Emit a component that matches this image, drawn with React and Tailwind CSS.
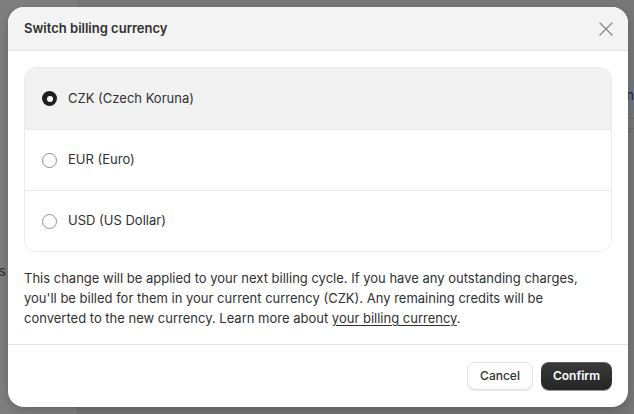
import { X } from "lucide-react";

const currencies = [
  { code: "CZK", name: "Czech Koruna" },
  { code: "EUR", name: "Euro" },
  { code: "USD", name: "US Dollar" },
];

function Radio({ checked }) {
  if (checked) {
    return (
      <span className="flex h-[15px] w-[15px] shrink-0 items-center justify-center rounded-full bg-[#1f1f1f]">
        <span className="h-[6px] w-[6px] rounded-full bg-white" />
      </span>
    );
  }
  return (
    <span className="h-[15px] w-[15px] shrink-0 rounded-full border border-[#8f8f8f] bg-white" />
  );
}

export default function App() {
  const selected = "CZK";

  return (
    <div
      className="relative h-[414px] w-[634px] overflow-hidden bg-[#7d7d7d] text-[#303030]"
      style={{ fontFamily: "Inter, 'Noto Sans', sans-serif" }}
    >
      {/* page underneath, dimmed */}
      <div className="flex h-full">
        <div className="w-[78px] border-r border-[#727272] bg-[#7f7f7f] pt-[262px] text-[13px] text-[#333]">
          <span className="-ml-[1px]">s</span>
        </div>
        <div className="flex-1 bg-[#777777]">
          <div className="ml-auto mt-[82px] flex h-[28px] w-[12px] items-center justify-end bg-[#6e7680] text-[13px] text-[#222]">
            n
          </div>
          <div className="ml-auto mt-[8px] h-px w-[12px] bg-[#6b6b6b]" />
          <div className="ml-auto mt-[9px] h-px w-[12px] bg-[#6b6b6b]" />
        </div>
      </div>

      {/* modal */}
      <div className="absolute left-[8px] top-[7px] flex w-[620px] flex-col overflow-hidden rounded-[16px] bg-white shadow-[0_4px_12px_rgba(0,0,0,0.2)]">
        <div className="flex h-[44px] items-center justify-between border-b border-[#e3e3e3] bg-[#f3f3f3] pl-4 pr-[10px]">
          <h2 className="text-[13px] font-semibold">Switch billing currency</h2>
          <X className="h-6 w-6 text-[#8a8a8a]" strokeWidth={1.4} />
        </div>

        <div className="flex flex-col gap-4 p-4">
          <div className="overflow-hidden rounded-[12px] border border-[#ebebeb]">
            {currencies.map((c, i) => (
              <div
                key={c.code}
                className={`flex h-[61px] items-center gap-[11px] pl-[17px] text-[13px] ${
                  i > 0 ? "border-t border-[#ebebeb]" : ""
                } ${c.code === selected ? "bg-[#f1f1f1]" : "bg-white"}`}
              >
                <Radio checked={c.code === selected} />
                <span>
                  {c.code} ({c.name})
                </span>
              </div>
            ))}
          </div>

          <p className="max-w-[572px] text-[13px] leading-[20px]">
            This change will be applied to your next billing cycle. If you have any outstanding charges,
            you'll be billed for them in your current currency (CZK). Any remaining credits will be
            converted to the new currency. Learn more about{" "}
            <span className="underline underline-offset-2">your billing currency</span>.
          </p>
        </div>

        <div className="flex justify-end gap-2 border-t border-[#e3e3e3] px-4 pb-[17px] pt-[17px]">
          <button className="h-[28px] rounded-[8px] border border-[#e3e3e3] bg-white px-[12px] text-[12px] font-medium text-[#303030] shadow-[0_1px_0_rgba(0,0,0,0.08)]">
            Cancel
          </button>
          <button className="h-[28px] rounded-[8px] bg-gradient-to-b from-[#3a3a3a] to-[#262626] px-[12px] text-[12px] font-semibold text-white shadow-[inset_0_1px_0_rgba(255,255,255,0.2),0_1px_0_rgba(0,0,0,0.4)]">
            Confirm
          </button>
        </div>
      </div>
    </div>
  );
}
